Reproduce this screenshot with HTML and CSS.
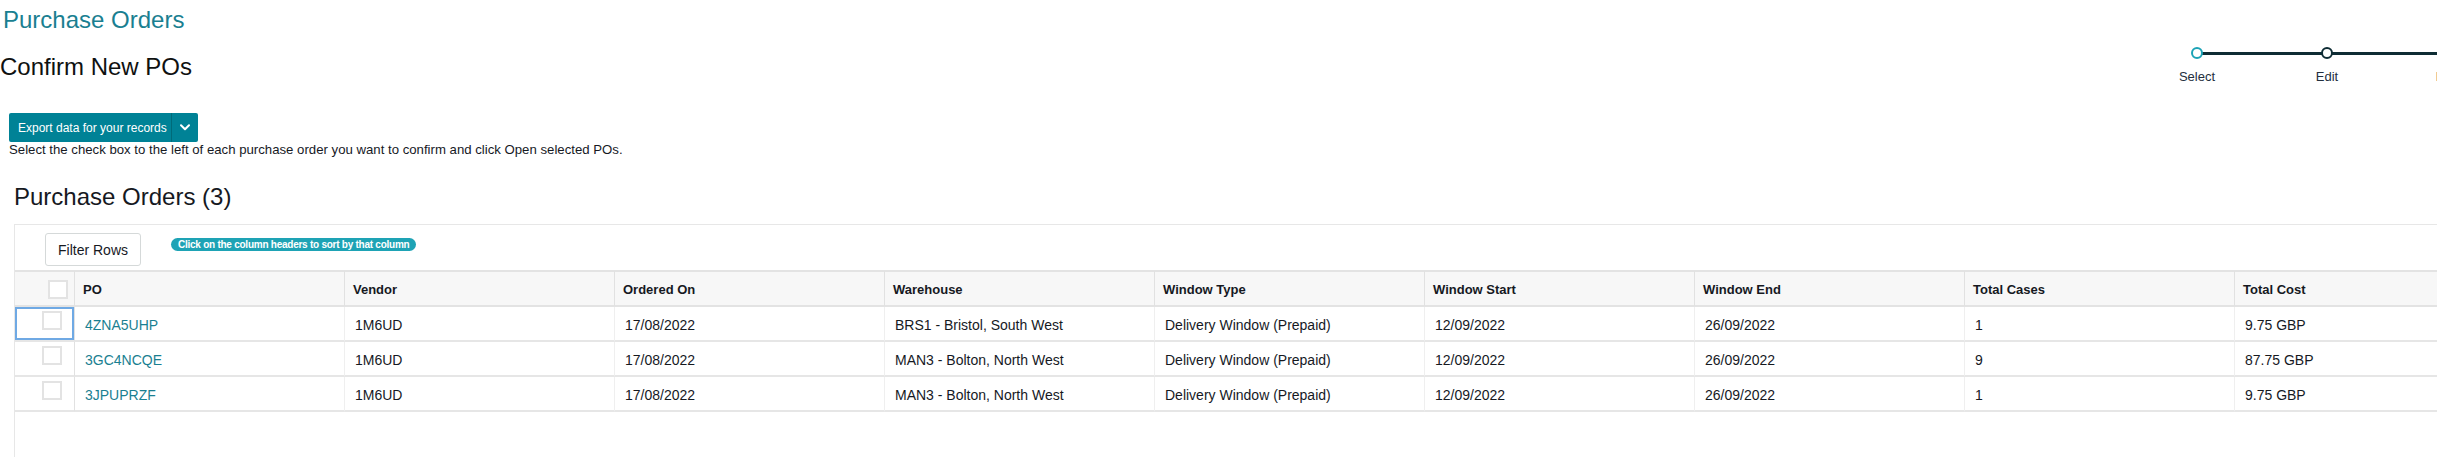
FILE: index.html
```html
<!DOCTYPE html>
<html lang="en">
<head>
<meta charset="utf-8">
<title>Confirm New POs</title>
<link rel="stylesheet" href="styles.css">
</head>
<body>
<div class="page">
  <a class="crumb" href="#">Purchase Orders</a>
  <div class="title-row">
    <h1>Confirm New POs</h1>
    <ol class="stepper">
      <li class="step current"><span class="dot"></span><span class="label">Select</span></li>
      <li class="step"><span class="dot"></span><span class="label">Edit</span></li>
      <li class="step last"><span class="dot"></span><span class="label">Review</span></li>
    </ol>
  </div>

  <div class="actions">
    <div class="split">
      <button class="export">Export data for your records</button>
      <button class="caret-btn" aria-label="More export options">
        <svg width="10" height="7" viewBox="0 0 10 7"><path d="M1 1.2 L5 5.2 L9 1.2" fill="none" stroke="#fff" stroke-width="2" stroke-linecap="round" stroke-linejoin="round"/></svg>
      </button>
    </div>
    <p class="hint">Select the check box to the left of each purchase order you want to confirm and click Open selected POs.</p>
  </div>

  <section class="po-section">
    <h2>Purchase Orders (3)</h2>
    <div class="grid-box">
      <div class="toolbar">
        <button class="filter-btn">Filter Rows</button>
        <span class="badge">Click on the column headers to sort by that column</span>
      </div>
      <table class="grid">
        <colgroup>
          <col class="c-cb"><col class="c-col"><col class="c-col"><col class="c-col"><col class="c-col"><col class="c-col"><col class="c-col"><col class="c-col"><col class="c-col"><col class="c-col">
        </colgroup>
        <thead>
          <tr>
            <th class="cb"><span class="box"></span></th>
            <th>PO</th>
            <th>Vendor</th>
            <th>Ordered On</th>
            <th>Warehouse</th>
            <th>Window Type</th>
            <th>Window Start</th>
            <th>Window End</th>
            <th>Total Cases</th>
            <th>Total Cost</th>
          </tr>
        </thead>
        <tbody>
          <tr>
            <td class="cb focused"><span class="box"></span></td>
            <td><a class="po" href="#">4ZNA5UHP</a></td>
            <td>1M6UD</td>
            <td>17/08/2022</td>
            <td>BRS1 - Bristol, South West</td>
            <td>Delivery Window (Prepaid)</td>
            <td>12/09/2022</td>
            <td>26/09/2022</td>
            <td>1</td>
            <td>9.75 GBP</td>
          </tr>
          <tr>
            <td class="cb"><span class="box"></span></td>
            <td><a class="po" href="#">3GC4NCQE</a></td>
            <td>1M6UD</td>
            <td>17/08/2022</td>
            <td>MAN3 - Bolton, North West</td>
            <td>Delivery Window (Prepaid)</td>
            <td>12/09/2022</td>
            <td>26/09/2022</td>
            <td>9</td>
            <td>87.75 GBP</td>
          </tr>
          <tr>
            <td class="cb"><span class="box"></span></td>
            <td><a class="po" href="#">3JPUPRZF</a></td>
            <td>1M6UD</td>
            <td>17/08/2022</td>
            <td>MAN3 - Bolton, North West</td>
            <td>Delivery Window (Prepaid)</td>
            <td>12/09/2022</td>
            <td>26/09/2022</td>
            <td>1</td>
            <td>9.75 GBP</td>
          </tr>
        </tbody>
      </table>
    </div>
  </section>
</div>
</body>
</html>
```
FILE: styles.css
```css
html, body {
  margin: 0;
  padding: 0;
  overflow: hidden;
  background: #fff;
}
body {
  font-family: "Liberation Sans", Arial, sans-serif;
  color: #16191f;
}
.page {
  width: 2522px;
}
.crumb {
  display: block;
  margin-left: 3px;
  padding-top: 6px;
  font-size: 24px;
  line-height: 28px;
  color: #1a7f91;
  text-decoration: none;
}
.title-row {
  display: flex;
  justify-content: space-between;
  align-items: flex-start;
  height: 50px;
}
h1 {
  margin: 19px 0 0;
  font-size: 24px;
  font-weight: 400;
  line-height: 28px;
  color: #0f1111;
}
.stepper {
  display: flex;
  list-style: none;
  margin: 13px 0 0;
  padding: 0;
}
.step {
  position: relative;
  width: 130px;
  display: flex;
  flex-direction: column;
  align-items: center;
}
.step::after {
  content: "";
  position: absolute;
  left: 50%;
  width: 100%;
  top: 5px;
  height: 3px;
  background: #0e2c34;
}
.dot {
  position: relative;
  z-index: 1;
  width: 12px;
  height: 12px;
  box-sizing: border-box;
  border: 2px solid #0e2c34;
  border-radius: 50%;
  background: #fff;
}
.step.current .dot {
  border-color: #1ca3b6;
}
.label {
  margin-top: 10px;
  font-size: 13px;
  line-height: 15px;
  color: #232f3e;
}
.actions {
  padding: 29px 0 0 9px;
}
.split {
  display: inline-flex;
  height: 29px;
  background: #008296;
  border-radius: 2px;
}
.split button {
  border: 0;
  background: transparent;
  color: #fff;
  font-family: inherit;
  padding: 0;
  cursor: pointer;
}
.export {
  width: 162px;
  padding: 0 0 0 9px !important;
  text-align: left;
  font-size: 12px;
}
.caret-btn {
  width: 27px;
  border-left: 1px solid #006a79 !important;
  display: flex;
  align-items: center;
  justify-content: center;
}
.hint {
  margin: 0;
  font-size: 13.2px;
  line-height: 16px;
  color: #16191f;
}
.po-section {
  padding-left: 14px;
}
h2 {
  margin: 25px 0 0;
  font-size: 24px;
  font-weight: 400;
  line-height: 28px;
  color: #16191f;
}
.grid-box {
  margin-top: 13px;
  border-top: 1px solid #e7e7e7;
  border-left: 1px solid #e7e7e7;
  min-height: 300px;
}
.toolbar {
  display: flex;
  align-items: flex-start;
  gap: 30px;
  height: 45px;
  box-sizing: border-box;
  padding: 8px 0 0 30px;
}
.filter-btn {
  width: 96px;
  height: 33px;
  border: 1px solid #d5d9d9;
  border-radius: 3px;
  background: #fff;
  font-family: inherit;
  font-size: 14px;
  color: #16191f;
  padding: 0;
}
.badge {
  margin-top: 5px;
  height: 13px;
  line-height: 13px;
  padding: 0 7px;
  border-radius: 7px;
  background: #1ea3b5;
  color: #fff;
  font-size: 10px;
  font-weight: 700;
  letter-spacing: -0.25px;
  white-space: nowrap;
}
.grid {
  border-collapse: separate;
  border-spacing: 0;
  table-layout: fixed;
  width: 2490px;
}
.c-cb { width: 60px; }
.c-col { width: 270px; }
.grid th,
.grid td {
  box-sizing: border-box;
  text-align: left;
  vertical-align: top;
  white-space: nowrap;
  overflow: hidden;
}
.grid thead tr { height: 37px; }
.grid tbody tr { height: 35px; }
.grid th {
  background: #f7f7f7;
  border-top: 2px solid #e3e3e3;
  border-bottom: 2px solid #e3e3e3;
  border-right: 1px solid #e1e1e1;
  padding: 9px 8px 0;
  font-size: 13px;
  line-height: 18px;
  font-weight: 700;
  color: #16191f;
}
.grid td {
  border-bottom: 2px solid #e6e6e6;
  border-right: 1px solid #efefef;
  padding: 8px 10px 0;
  font-size: 14px;
  line-height: 20px;
  color: #16191f;
}
.grid th.cb {
  padding: 8px 0 0 33px;
}
.grid td.cb {
  padding: 4px 0 0 27px;
  border-right: 1px solid #e1e1e1;
}
.grid td.focused {
  box-shadow: inset 0 0 0 2px #6fa9e4;
}
.box {
  display: block;
  width: 20px;
  height: 19px;
  box-sizing: border-box;
  border: 2px solid #e3e3e3;
  background: #fff;
}
.po {
  color: #1a7f91;
  text-decoration: none;
}
```
